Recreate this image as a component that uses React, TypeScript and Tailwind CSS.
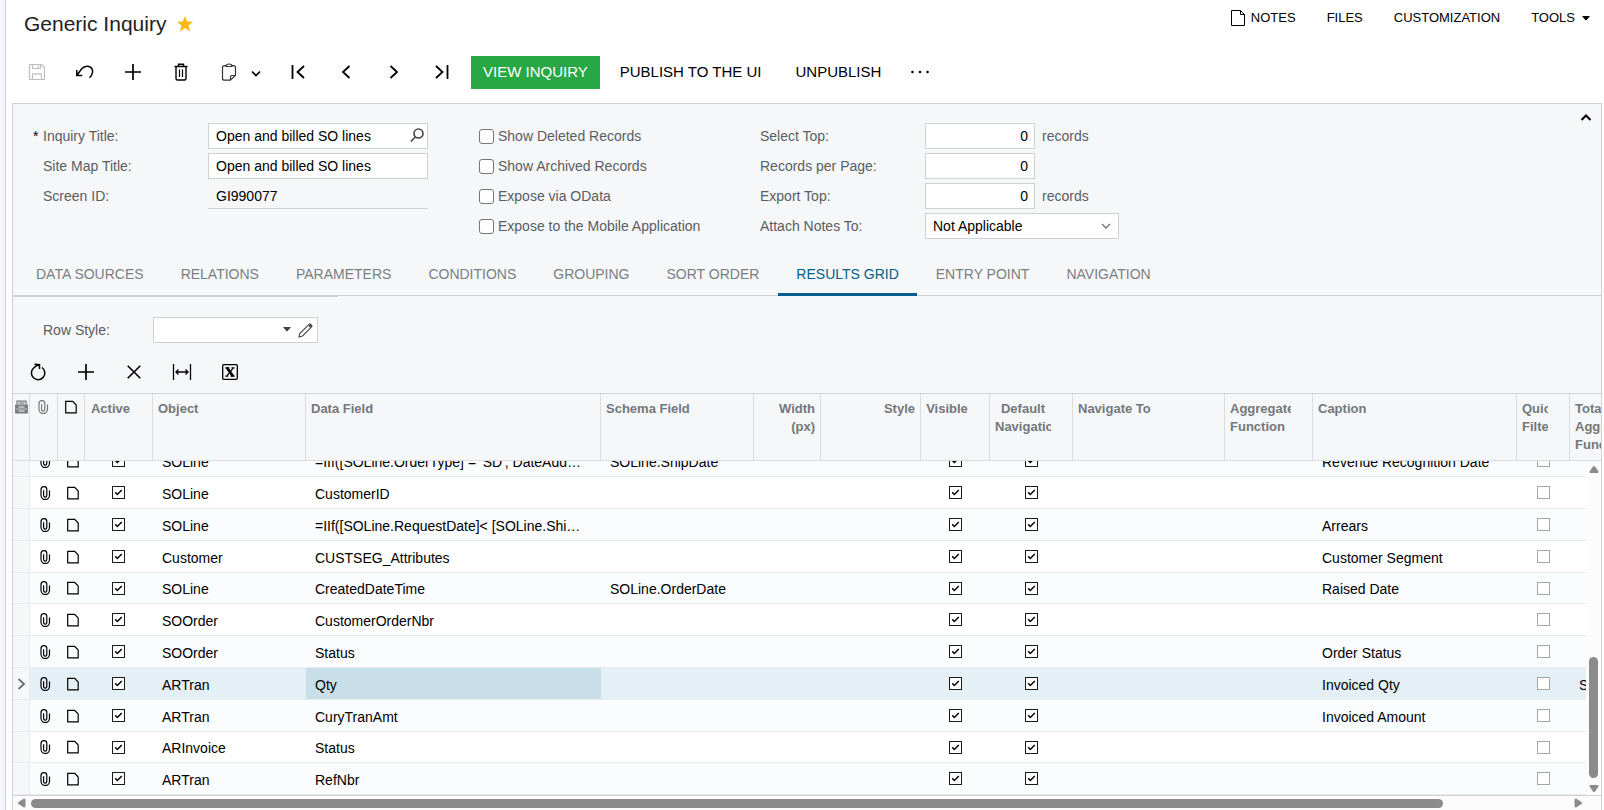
import { useState } from 'react';
import type { ReactNode } from 'react';
import clsx from 'clsx';

interface GridRow {
  object: string;
  field: string;
  schema?: string;
  caption?: string;
  total?: string;
}

interface Column {
  label: string;
  width: number;
  align?: 'left' | 'center' | 'right';
  icon?: ReactNode;
}

const ROWS: GridRow[] = [
  {
    object: 'SOLine',
    field: "=IIf([SOLine.OrderType] = 'SD', DateAdd…",
    schema: 'SOLine.ShipDate',
    caption: 'Revenue Recognition Date',
  },
  { object: 'SOLine', field: 'CustomerID' },
  { object: 'SOLine', field: '=IIf([SOLine.RequestDate]< [SOLine.Shi…', caption: 'Arrears' },
  { object: 'Customer', field: 'CUSTSEG_Attributes', caption: 'Customer Segment' },
  { object: 'SOLine', field: 'CreatedDateTime', schema: 'SOLine.OrderDate', caption: 'Raised Date' },
  { object: 'SOOrder', field: 'CustomerOrderNbr' },
  { object: 'SOOrder', field: 'Status', caption: 'Order Status' },
  { object: 'ARTran', field: 'Qty', caption: 'Invoiced Qty', total: 'Sum' },
  { object: 'ARTran', field: 'CuryTranAmt', caption: 'Invoiced Amount' },
  { object: 'ARInvoice', field: 'Status' },
  { object: 'ARTran', field: 'RefNbr' },
];

const TABS = [
  'DATA SOURCES',
  'RELATIONS',
  'PARAMETERS',
  'CONDITIONS',
  'GROUPING',
  'SORT ORDER',
  'RESULTS GRID',
  'ENTRY POINT',
  'NAVIGATION',
];

const COLUMNS: Column[] = [
  { label: 'Row settings', width: 17, icon: <SettingsIcon /> },
  { label: 'Files', width: 28, icon: <ClipIcon className="text-[#777]" /> },
  { label: 'Notes', width: 27, icon: <NoteIcon /> },
  { label: 'Active', width: 68, align: 'center' },
  { label: 'Object', width: 153 },
  { label: 'Data Field', width: 295 },
  { label: 'Schema Field', width: 153 },
  { label: 'Width (px)', width: 67, align: 'right' },
  { label: 'Style', width: 100, align: 'right' },
  { label: 'Visible', width: 69, align: 'center' },
  { label: 'Default Navigation', width: 83, align: 'center' },
  { label: 'Navigate To', width: 152 },
  { label: 'Aggregate Function', width: 88 },
  { label: 'Caption', width: 204 },
  { label: 'Quick Filter', width: 53 },
  { label: 'Total Aggregate Function', width: 100 },
];

// --- Icons ---

interface IconProps {
  w?: number;
  h?: number;
  sw?: number;
  className?: string;
  children: ReactNode;
}

function Icon({ w = 18, h = 18, sw = 1.5, className, children }: IconProps) {
  return (
    <svg
      width={w}
      height={h}
      viewBox={`0 0 ${w} ${h}`}
      fill="none"
      stroke="currentColor"
      strokeWidth={sw}
      className={clsx('shrink-0', className)}
      aria-hidden="true"
    >
      {children}
    </svg>
  );
}

function SettingsIcon() {
  return (
    <Icon w={13} h={14} sw={1.2} className="text-[#777a7e]">
      <path d="M2 4.500V1.200h9v3.300M3.500 3.200h6" />
      <path d="M.7 5h11.600v8H.7z" fill="currentColor" />
      <path d="M3.500 7h6M3.500 11h6" stroke="#f5f7f9" strokeWidth={1.2} />
      <path d="M1 9h11" stroke="#f5f7f9" strokeWidth={0.6} />
    </Icon>
  );
}

function ClipIcon({ className }: { className?: string }) {
  return (
    <Icon w={11} h={14} sw={1.2} className={className}>
      <path d="M1 4v5.200a4.200 4.200 0 0 0 8.500 0V4.500M1 4.200V3.500a2.900 2.900 0 0 1 5.800 0v6a1.600 1.600 0 0 1-3.200 0V4.200" />
    </Icon>
  );
}

function NoteIcon() {
  return (
    <Icon w={12} h={14} sw={1.2}>
      <path d="M.7 1.300h7l3.500 3.700v7.800H.7z" />
    </Icon>
  );
}

function PlusIcon() {
  return (
    <Icon sw={1.7}>
      <path d="M9 1v16M1 9h16" />
    </Icon>
  );
}

function Caret({ className }: { className?: string }) {
  return (
    <svg width="8" height="5" viewBox="0 0 8 5" className={className} aria-hidden="true">
      <path d="M0 0h8L4.500 4.300h-1z" fill="currentColor" />
    </svg>
  );
}

// --- Form controls ---

function ToolButton({ label, wide, children }: { label: string; wide?: boolean; children: ReactNode }) {
  return (
    <button
      type="button"
      aria-label={label}
      className={clsx('flex h-10 shrink-0 items-center', wide ? 'w-[69px] gap-5 pl-4' : 'w-12 justify-center')}
    >
      {children}
    </button>
  );
}

function Field({ id, label, required, children }: { id: string; label: string; required?: boolean; children: ReactNode }) {
  return (
    <div className="flex h-[26px] items-center">
      <label htmlFor={id} className="flex w-[175px] text-[#5a5d61]">
        <span className="w-[10px] text-black">{required && '*'}</span>
        {label}
      </label>
      {children}
    </div>
  );
}

function NumberField({ id, label, suffix }: { id: string; label: string; suffix?: string }) {
  return (
    <div className="flex h-[26px] items-center">
      <label htmlFor={id} className="w-[165px]">
        {label}
      </label>
      <input
        id={id}
        defaultValue="0"
        className="h-[26px] w-[110px] border border-[#cfd2d5] bg-white px-1.5 text-right text-black outline-none"
      />
      {suffix && <span className="ml-[7px]">{suffix}</span>}
    </div>
  );
}

function OptionCheckbox({ label }: { label: string }) {
  return (
    <label className="flex h-[26px] items-center gap-1">
      <input type="checkbox" className="size-[15px] appearance-none rounded-[3px] border border-[#767676] bg-white checked:bg-[#015f8b]" />
      {label}
    </label>
  );
}

function GridCheckbox({ checked = false, label }: { checked?: boolean; label: string }) {
  return (
    <span className="mx-auto grid size-[13px]">
      <input
        type="checkbox"
        defaultChecked={checked}
        aria-label={label}
        className="peer col-start-1 row-start-1 size-[13px] appearance-none border border-[#a6a6a6] bg-white checked:border-[#1a1a1a]"
      />
      <svg
        viewBox="0 0 13 13"
        className="pointer-events-none invisible col-start-1 row-start-1 size-[13px] peer-checked:visible"
        fill="none"
        stroke="black"
        strokeWidth={1.5}
        aria-hidden="true"
      >
        <path d="M3.200 6.200 5.300 8.500 9.800 4" />
      </svg>
    </span>
  );
}

// --- Grid ---

function ColGroup() {
  return (
    <colgroup>
      {COLUMNS.map((c) => (
        <col key={c.label} style={{ width: c.width }} />
      ))}
    </colgroup>
  );
}

function ResultsGrid() {
  const [selected, setSelected] = useState(7);

  return (
    <div className="flex min-h-0 flex-1 flex-col border-t border-[#cfd2d5]">
      <div className="shrink-0 overflow-hidden">
        <table className="w-[1657px] table-fixed border-separate border-spacing-0">
          <ColGroup />
          <thead>
            <tr className="h-[67px]">
              {COLUMNS.map((c) => (
                <th
                  key={c.label}
                  className={clsx(
                    'border-r border-b border-[#dadde0] pt-1.5 align-top text-[13px] leading-[18px] font-bold text-[#74777b]',
                    c.icon ? 'px-0' : c.align === 'right' ? 'px-[5px]' : 'pr-[21px] pl-[5px]',
                    c.align === 'center' && 'text-center',
                    c.align === 'right' && 'text-right',
                    !c.align && 'text-left'
                  )}
                >
                  {c.icon ? (
                    <span className="flex justify-center text-black">{c.icon}</span>
                  ) : (
                    <div className="overflow-hidden">{c.label}</div>
                  )}
                </th>
              ))}
            </tr>
          </thead>
        </table>
      </div>

      <div className="flex min-h-0 flex-1">
        {/* Rows are scrolled to the end */}
        <div className="flex min-w-0 flex-1 flex-col justify-end overflow-hidden">
          <table className="w-[1657px] shrink-0 table-fixed border-separate border-spacing-0">
            <ColGroup />
            <tbody>
              {ROWS.map((row, i) => {
                const active = i === selected;
                return (
                  <tr
                    key={i}
                    onClick={() => setSelected(i)}
                    className={clsx(
                      'h-8 nth-[5n]:h-[31px] [&>td]:border-b [&>td]:border-[#e6edf1] [&>td]:p-0 [&>td]:whitespace-nowrap',
                      active ? 'bg-[#e5eff6]' : 'bg-white odd:bg-[#fafcfe]'
                    )}
                  >
                    <td className="border-r bg-[#f5f7f9] text-[#6b6e72]">
                      {active && (
                        <Icon w={9} h={12} sw={1.8} className="mx-auto">
                          <path d="M1.500 1 7 6l-5.500 5" />
                        </Icon>
                      )}
                    </td>
                    <td>
                      <ClipIcon className="ml-[10px]" />
                    </td>
                    <td>
                      <span className="flex justify-center pl-0.5">
                        <NoteIcon />
                      </span>
                    </td>
                    <td className="pr-px!">
                      <GridCheckbox checked label="Active" />
                    </td>
                    <td>
                      <div className="px-[9px] pt-0.5">{row.object}</div>
                    </td>
                    <td className={clsx(active && 'bg-[#c8dfea]')}>
                      <div className="px-[9px] pt-0.5">{row.field}</div>
                    </td>
                    <td>
                      <div className="px-[9px] pt-0.5">{row.schema}</div>
                    </td>
                    <td />
                    <td />
                    <td>
                      <GridCheckbox checked label="Visible" />
                    </td>
                    <td>
                      <GridCheckbox checked label="Default Navigation" />
                    </td>
                    <td />
                    <td />
                    <td>
                      <div className="px-[9px] pt-0.5">{row.caption}</div>
                    </td>
                    <td>
                      <GridCheckbox label="Quick Filter" />
                    </td>
                    <td>
                      <div className="px-[9px] pt-0.5">{row.total}</div>
                    </td>
                  </tr>
                );
              })}
            </tbody>
          </table>
        </div>

        {/* Vertical scrollbar */}
        <div className="flex w-[15px] shrink-0 flex-col items-center bg-[#fcfcfc] pt-[5px] pb-[3px] text-[#8b8b8b]">
          <svg width="10" height="7" viewBox="0 0 10 7" fill="currentColor" aria-hidden="true">
            <path d="M4 .5Q5-.5 6 .5L9.500 5.500Q9.500 7 8.500 7h-7Q.5 7 .5 5.500z" />
          </svg>
          <div className="mt-auto mb-[7px] h-[37%] w-[9px] rounded-full bg-[#8b8b8b]" />
          <svg width="10" height="7" viewBox="0 0 10 7" fill="currentColor" aria-hidden="true">
            <path d="M4 6.500Q5 7.500 6 6.500L9.500 1.500Q9.500 0 8.500 0h-7Q.5 0 .5 1.500z" />
          </svg>
        </div>
      </div>

      {/* Horizontal scrollbar */}
      <div className="flex h-[15px] shrink-0 items-center border-t border-[#cfd2d5] bg-[#fcfcfc] pr-[19px] pl-[5px] text-[#8b8b8b]">
        <svg width="8" height="10" viewBox="0 0 8 10" fill="currentColor" aria-hidden="true">
          <path d="M.5 6Q-.5 5 .5 4L6 .5Q7.500 .5 7.500 2v6Q7.500 9.500 6 9.500z" />
        </svg>
        <div className="flex-1 px-[5px]">
          <div className="h-[9px] w-[91.8%] rounded-full bg-[#8b8b8b]" />
        </div>
        <svg width="8" height="10" viewBox="0 0 8 10" fill="currentColor" aria-hidden="true">
          <path d="M7.500 6Q8.500 5 7.500 4L2 .5Q.5 .5 .5 2v6Q.5 9.500 2 9.500z" />
        </svg>
      </div>
    </div>
  );
}

// --- Page sections ---

function PageHeader() {
  return (
    <header className="flex h-12 shrink-0 justify-between pr-[14px] pl-[18px]">
      <div className="flex items-center gap-[11px]">
        <h1 className="text-[21px] leading-6 text-[#222]">Generic Inquiry</h1>
        <button type="button" aria-label="Remove from favorites">
          <svg width="16" height="16" viewBox="0 0 16 16" fill="#fbb912" aria-hidden="true">
            <path d="m8 0 2.200 5.500 5.800.3-4.500 3.600 1.600 6L8 12l-5.100 3.400 1.600-6L0 5.800l5.800-.3z" />
          </svg>
        </button>
      </div>
      <nav className="flex h-9 items-center gap-[31px] text-[13px]">
        <a href="#notes" className="flex items-center gap-1.5">
          <Icon w={14} h={16} sw={1}>
            <path d="M.5.500h9l4 4v11H.5zM9.500.500v4h4" />
          </Icon>
          NOTES
        </a>
        <a href="#files">FILES</a>
        <a href="#customization">CUSTOMIZATION</a>
        <button type="button" className="flex items-center gap-[7px]">
          TOOLS
          <Caret />
        </button>
      </nav>
    </header>
  );
}

function MainToolbar() {
  return (
    <div className="mb-[7px] flex h-12 shrink-0 items-center pl-[7px] text-[15px]">
      <ToolButton label="Save">
        <Icon sw={1.2} className="text-[#bdbdbd]">
          <path d="M2 1.500h11.500l3 3V16q0 .5-.5.500H2q-.5 0-.5-.5V2q0-.5.5-.5z" />
          <path d="M4.500 1.500v4h8v-4M10.300 2.500v2M4.500 16.500v-5q0-.7.700-.7h7.600q.7 0 .7.700v5" />
        </Icon>
      </ToolButton>
      <ToolButton label="Undo">
        <Icon w={18} h={14} sw={1.5}>
          <path d="M.8 5v5.500h5.500M.8 10.500 5.500 4Q9 .2 13 1.500q4.300 2 3.500 6-.500 3-3 5.200" />
        </Icon>
      </ToolButton>
      <ToolButton label="Add">
        <PlusIcon />
      </ToolButton>
      <ToolButton label="Delete">
        <Icon w={14} h={18} sw={1.4}>
          <path d="M.5 3.500h13M4.500 3V1.200h5V3M2 3.500v12q0 1.500 1.500 1.500h7q1.500 0 1.500-1.500v-12" />
          <path d="M5.500 6.500v7.500M8.500 6.500v7.500" strokeWidth={1.2} />
        </Icon>
      </ToolButton>
      <ToolButton label="Clipboard" wide>
        <Icon w={16} h={18} sw={1.2} className="text-[#333]">
          <path d="M5 2.700H3.500q-2 0-2 2v10.500q0 2 2 2h5.800l5.200-4.700V4.700q0-2-2-2H11M5 3.500q0-2.500 3-2.500t3 2.500zM9.500 17v-3q0-1.500 1.500-1.500h3.300" />
        </Icon>
        <Icon w={10} h={8} sw={1.7} className="-ml-1.5 mt-1">
          <path d="m1 1.500 4 4 4-4" />
        </Icon>
      </ToolButton>
      <ToolButton label="First record">
        <Icon w={14} h={14} sw={1.8}>
          <path d="M1.500 0v14M13 1 6.500 7l6.500 6" />
        </Icon>
      </ToolButton>
      <ToolButton label="Previous record">
        <Icon w={10} h={14} sw={1.8}>
          <path d="M8.500 1 2 7l6.500 6" />
        </Icon>
      </ToolButton>
      <ToolButton label="Next record">
        <Icon w={10} h={14} sw={1.8}>
          <path d="M1.500 1 8 7l-6.500 6" />
        </Icon>
      </ToolButton>
      <ToolButton label="Last record">
        <Icon w={14} h={14} sw={1.8}>
          <path d="M12.500 0v14M1 1l6.500 6L1 13" />
        </Icon>
      </ToolButton>
      <button type="button" className="ml-[5px] h-[33px] bg-[#28a745] px-3 text-white">
        VIEW INQUIRY
      </button>
      <button type="button" className="ml-5">
        PUBLISH TO THE UI
      </button>
      <button type="button" className="ml-[34px]">
        UNPUBLISH
      </button>
      <button type="button" aria-label="More" className="ml-[30px]">
        <svg width="18" height="4" viewBox="0 0 18 4" aria-hidden="true">
          <circle cx="1.500" cy="2" r="1.300" />
          <circle cx="9" cy="2" r="1.300" />
          <circle cx="16.500" cy="2" r="1.300" />
        </svg>
      </button>
    </div>
  );
}

function SummaryForm() {
  return (
    <form className="flex pt-[19px] pl-5 text-[#5a5d61]">
      <div className="flex flex-col gap-1">
        <Field id="inquiry-title" label="Inquiry Title:" required>
          <div className="relative">
            <input
              id="inquiry-title"
              defaultValue="Open and billed SO lines"
              className="block h-[26px] w-[220px] border border-[#cfd2d5] bg-white pr-6 pl-[7px] text-black outline-none"
            />
            <button type="button" aria-label="Search" className="absolute top-[5px] right-1 text-[#444]">
              <Icon w={14} h={15} sw={1.6}>
                <circle cx="8.500" cy="5.500" r="4.500" />
                <path d="M5.300 9 .8 13.500" />
              </Icon>
            </button>
          </div>
        </Field>
        <Field id="site-map-title" label="Site Map Title:">
          <input
            id="site-map-title"
            defaultValue="Open and billed SO lines"
            className="h-[26px] w-[220px] border border-[#cfd2d5] bg-white px-[7px] text-black outline-none"
          />
        </Field>
        <Field id="screen-id" label="Screen ID:">
          <input
            id="screen-id"
            readOnly
            defaultValue="GI990077"
            className="h-[26px] w-[220px] border-b border-[#cfd2d5] px-2 text-black outline-none"
          />
        </Field>
      </div>

      <div className="ml-[51px] flex w-[281px] flex-col gap-1">
        <OptionCheckbox label="Show Deleted Records" />
        <OptionCheckbox label="Show Archived Records" />
        <OptionCheckbox label="Expose via OData" />
        <OptionCheckbox label="Expose to the Mobile Application" />
      </div>

      <div className="flex flex-col gap-1">
        <NumberField id="select-top" label="Select Top:" suffix="records" />
        <NumberField id="records-per-page" label="Records per Page:" />
        <NumberField id="export-top" label="Export Top:" suffix="records" />
        <div className="flex h-[26px] items-center">
          <label htmlFor="attach-notes" className="w-[165px]">
            Attach Notes To:
          </label>
          <div className="relative">
            <select
              id="attach-notes"
              className="block h-[26px] w-[194px] appearance-none border border-[#cfd2d5] bg-white px-[7px] text-black outline-none"
            >
              <option>Not Applicable</option>
            </select>
            <Icon w={10} h={7} sw={1.4} className="pointer-events-none absolute top-[10px] right-2 text-[#777]">
              <path d="m1 1 4 4 4-4" />
            </Icon>
          </div>
        </div>
      </div>

      <button type="button" aria-label="Collapse" className="mt-[-10px] mr-[9px] ml-auto self-start text-black">
        <Icon w={12} h={9} sw={2}>
          <path d="m1.500 7 4.500-4.500L10.500 7" />
        </Icon>
      </button>
    </form>
  );
}

export default function App() {
  const [tab, setTab] = useState('RESULTS GRID');

  return (
    <div className="flex h-screen overflow-hidden bg-white font-['Liberation_Sans',Arial,sans-serif] text-[14px] leading-5 text-black">
      <div className="w-1.5 shrink-0 border-r border-[#cfd2d5] bg-[#f4f5f8]" />
      <div className="flex min-w-0 flex-1 flex-col">
        <PageHeader />
        <MainToolbar />

        <main className="mr-0.5 ml-1.5 flex min-h-0 flex-1 flex-col border border-b-0 border-[#cfd2d5] bg-[#f5f7f9]">
          <SummaryForm />

          <div role="tablist" className="mt-[17px] flex shrink-0 gap-px border-b border-[#cfd2d5] pl-[5px]">
            {TABS.map((t) => (
              <button
                key={t}
                type="button"
                role="tab"
                aria-selected={t === tab}
                onClick={() => setTab(t)}
                className={clsx(
                  '-mb-px h-10 border-b-3 px-[18px] pb-0.5',
                  t === tab ? 'border-[#015f8b] text-[#015f8b]' : 'border-transparent text-[#7b7e82]'
                )}
              >
                {t}
              </button>
            ))}
          </div>
          <div className="h-px w-[325px] shrink-0 bg-[#cfd2d5]" />

          <div className="flex shrink-0 items-center pt-5 pl-[30px]">
            <label htmlFor="row-style" className="w-[110px] text-[#5a5d61]">
              Row Style:
            </label>
            <div className="relative">
              <input id="row-style" className="block h-[26px] w-[165px] border border-[#cfd2d5] bg-white px-[7px] outline-none" />
              <div className="absolute top-[5px] right-[5px] flex items-start gap-[7px] text-[#444]">
                <Caret className="mt-[5px]" />
                <button type="button" aria-label="Edit style">
                  <Icon w={15} h={16} sw={1.1}>
                    <path d="M1 15 1.800 11.500 11 2.300q.8-.8 1.600 0l1 1q.8.8 0 1.600L4.500 14z" />
                    <path d="m11.500 3 1.600 1.600" strokeWidth={3} />
                  </Icon>
                </button>
              </div>
            </div>
          </div>

          <div className="mt-2 flex h-[42px] shrink-0 items-center pl-px">
            <ToolButton label="Refresh">
              <Icon w={16} h={18} sw={1.5}>
                <path d="M12 4.500A6.700 6.700 0 1 1 3.600 5Q5.500 2.700 9 2M4.500 1.200l5 .5V6" />
              </Icon>
            </ToolButton>
            <ToolButton label="Add row">
              <PlusIcon />
            </ToolButton>
            <ToolButton label="Delete row">
              <Icon w={14} h={14} sw={1.6}>
                <path d="m.7.700 12.600 12.600M13.300.700.7 13.300" />
              </Icon>
            </ToolButton>
            <ToolButton label="Fit to screen">
              <Icon w={20} h={16} sw={1.3}>
                <path d="M1.500 0v16M18.500 0v16M4 8h12M6.500 5.500 4 8l2.500 2.500M13.500 5.500 16 8l-2.500 2.500" />
              </Icon>
            </ToolButton>
            <ToolButton label="Export to Excel">
              <Icon w={16} h={16} sw={1.3}>
                <rect x=".7" y=".7" width="14.600" height="14.600" rx="1" />
                <path d="M3.300 3.800h4M9.500 3.800h3M3.300 12.200h3M8.700 12.200h4M11.300 3.800 4.700 12.200" strokeWidth={1.2} />
                <path d="m5 3.800 6 8.400" strokeWidth={2.8} />
              </Icon>
            </ToolButton>
          </div>

          <ResultsGrid />
        </main>
      </div>
    </div>
  );
}
